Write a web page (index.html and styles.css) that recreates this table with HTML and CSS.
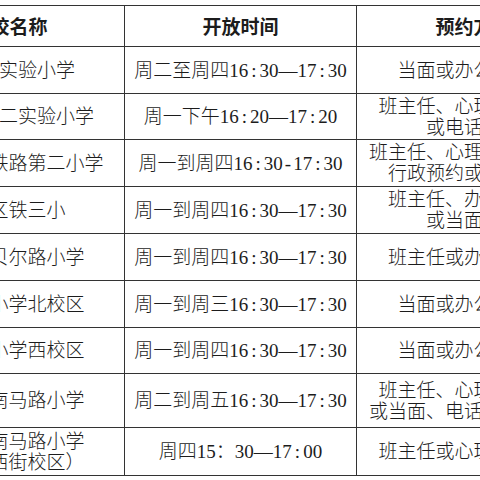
FILE: index.html
```html
<!DOCTYPE html>
<html lang="zh-CN">
<head>
<meta charset="utf-8">
<title>开放时间与预约方式</title>
<link rel="stylesheet" href="styles.css">
</head>
<body>
<div class="viewport">
  <table class="schedule">
    <colgroup>
      <col class="c-name">
      <col class="c-time">
      <col class="c-way">
    </colgroup>
    <thead>
      <tr class="head">
        <th class="h-name">学校名称</th>
        <th>开放时间</th>
        <th>预约方式</th>
      </tr>
    </thead>
    <tbody>
      <tr>
        <td>市实验小学</td>
        <td>周二至周四16<span class="colon">:</span>30—17<span class="colon">:</span>30</td>
        <td>当面或办公室预约</td>
      </tr>
      <tr class="r46">
        <td>市第二实验小学</td>
        <td>周一下午16<span class="colon">:</span>20—17<span class="colon">:</span>20</td>
        <td>班主任、心理老师预约<br>或电话预约</td>
      </tr>
      <tr>
        <td>哈市铁路第二小学</td>
        <td>周一到周四16<span class="colon">:</span>30<span class="hyphen">-</span>17<span class="colon">:</span>30</td>
        <td>班主任、心理健康老师、<br>行政预约或当面预约</td>
      </tr>
      <tr>
        <td>区铁三小</td>
        <td>周一到周四16<span class="colon">:</span>30—17<span class="colon">:</span>30</td>
        <td>班主任、办公室预约<br>或当面预约</td>
      </tr>
      <tr>
        <td>东贝尔路小学</td>
        <td>周一到周四16<span class="colon">:</span>30—17<span class="colon">:</span>30</td>
        <td>班主任或办公室预约</td>
      </tr>
      <tr>
        <td>一小学北校区</td>
        <td>周一到周三16<span class="colon">:</span>30—17<span class="colon">:</span>30</td>
        <td>当面或办公室预约</td>
      </tr>
      <tr class="r46">
        <td>一小学西校区</td>
        <td>周一到周四16<span class="colon">:</span>30—17<span class="colon">:</span>30</td>
        <td>当面或办公室预约</td>
      </tr>
      <tr class="r54">
        <td>区南马路小学</td>
        <td>周二到周五16<span class="colon">:</span>30—17<span class="colon">:</span>30</td>
        <td>班主任、心理老师预约<br>或当面、电话、网络预约</td>
      </tr>
      <tr class="r48">
        <td>区南马路小学<br>（西街校区）</td>
        <td>周四15：30—17<span class="colon">:</span>00</td>
        <td>班主任或心理老师预约</td>
      </tr>
    </tbody>
  </table>
</div>
</body>
</html>
```

FILE: styles.css
```css
html, body {
  margin: 0;
  padding: 0;
  background: #ffffff;
}

.viewport {
  width: 480px;
  height: 480px;
  overflow: hidden;
  padding-top: 5px;
  box-sizing: border-box;
}

.schedule {
  border-collapse: collapse;
  table-layout: fixed;
  width: 660px;
  margin-left: -70px;
  font-family: "Liberation Serif", "Noto Sans CJK SC", serif;
  font-size: 19px;
  font-weight: 300;
  line-height: 21px;
  color: #1c1c1c;
}

.c-name { width: 194px; }
.c-time { width: 232px; }
.c-way  { width: 234px; }

.schedule th,
.schedule td {
  border: 1px solid #333333;
  padding: 0 4px;
  text-align: center;
  vertical-align: middle;
  white-space: nowrap;
}

.schedule th {
  font-weight: 700;
  padding-top: 3px;
}

.schedule .h-name {
  padding-right: 40px;
}

.head { height: 41px; }

.schedule tbody tr { height: 47px; }
.schedule tbody tr.r46 { height: 46px; }
.schedule tbody tr.r54 { height: 54px; }
.schedule tbody tr.r48 { height: 48px; }

.colon {
  padding: 0 3px;
}

.hyphen {
  padding: 0 2px;
}
```
